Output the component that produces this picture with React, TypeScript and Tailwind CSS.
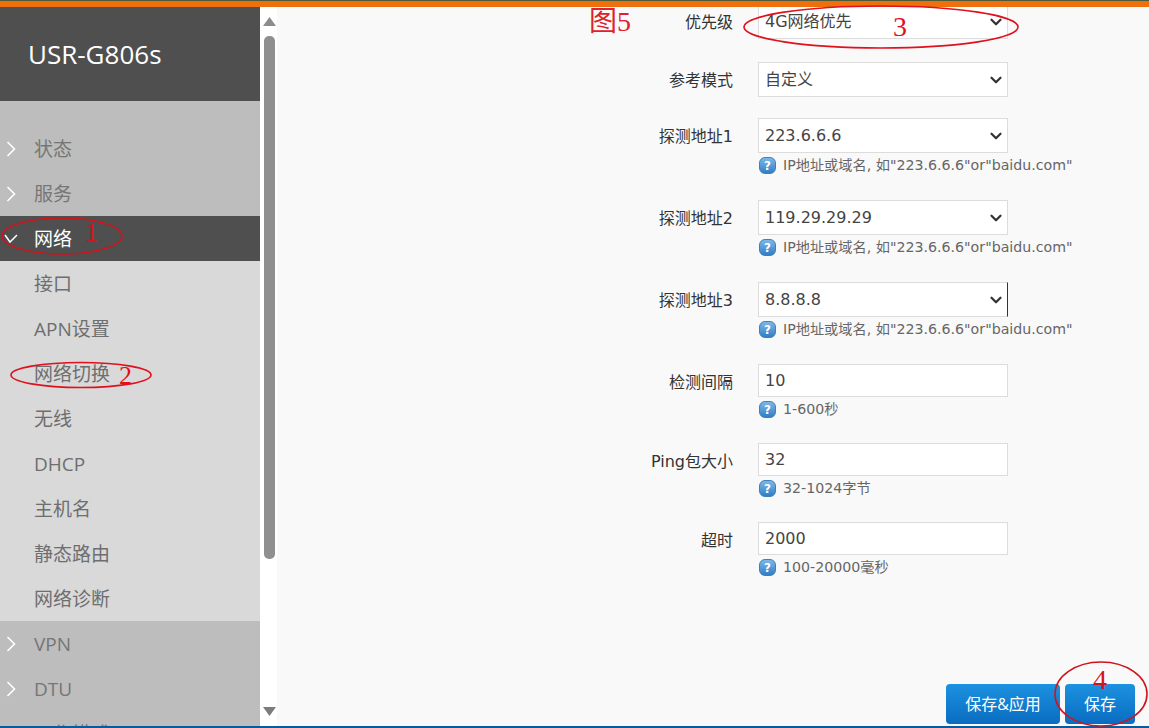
import { ChevronDown } from "lucide-react";

const sideFont = "font-['Open_Sans','Noto_Sans_CJK_SC',sans-serif]";
const formFont = "font-['DejaVu_Sans','Noto_Sans_CJK_SC',sans-serif]";
const markFont = "font-['Liberation_Serif','Noto_Sans_CJK_SC',serif]";

function Chevron({ open }: { open?: boolean }) {
  return open ? (
    <svg width="16" height="12" viewBox="0 0 16 12" fill="none" className="absolute left-[3px] top-[17px]">
      <polyline points="2,2 7,9 14,2" stroke="#ffffff" strokeWidth="1.5" />
    </svg>
  ) : (
    <svg width="10" height="16" viewBox="0 0 10 16" fill="none" className="absolute left-[6px] top-[15px]">
      <polyline points="1.5,1 8.5,8 1.5,15" stroke="#ffffff" strokeWidth="1.6" />
    </svg>
  );
}

function TopItem({ label, active }: { label: string; active?: boolean }) {
  return (
    <div
      className={`relative flex h-[45px] shrink-0 items-center pl-[34px] pt-[2px] text-[19px] ${
        active ? "bg-[#4f4f4f] text-white" : "text-[#767676]"
      }`}
    >
      <Chevron open={active} />
      {label}
    </div>
  );
}

function SubItem({ label }: { label: string }) {
  return <div className="flex h-[45px] shrink-0 items-center pl-[34px] pt-[2px] text-[19px] text-[#6e6e6e]">{label}</div>;
}

function Hint({ text }: { text: string }) {
  return (
    <div className={`flex items-center gap-[7px] whitespace-nowrap text-[14.2px] leading-none text-[#666666] ${formFont}`}>
      <span className="flex h-[17px] w-[17px] shrink-0 items-center justify-center rounded-[6px] border border-[#3f7fb8] bg-gradient-to-b from-[#7db8e8] to-[#2f7fc6] text-[12px] font-bold leading-none text-white">
        ?
      </span>
      {text}
    </div>
  );
}

function Row({
  label,
  value,
  hint,
  select,
  cursor,
  className,
}: {
  label: string;
  value: string;
  hint?: string;
  select?: boolean;
  cursor?: boolean;
  className: string;
}) {
  return (
    <div className={`flex gap-[25px] ${className}`}>
      <div className="flex h-[35px] w-[456px] items-center justify-end pt-[2px] text-[16px] text-[#333333]">
        {label}
      </div>
      <div className="w-[250px]">
        <div
          className={`relative flex items-center border border-[#dcdcdc] bg-white pl-[6px] pt-[1px] text-[16px] text-[#444444] ${
            select ? "h-[35px]" : "h-[33px]"
          } ${cursor ? "border-r-[#333333]" : ""}`}
        >
          {value}
          {select && (
            <ChevronDown size={18} strokeWidth={3} className="absolute right-[2px] top-[8px] text-[#333333]" />
          )}
        </div>
        {hint && (
          <div className={`flex items-center pl-[1px] ${select ? "h-[25px]" : "h-[25px]"} ${select ? "-mb-[1px]" : ""}`}>
            <Hint text={hint} />
          </div>
        )}
      </div>
    </div>
  );
}

const ipHint = 'IP地址或域名, 如"223.6.6.6"or"baidu.com"';

export default function App() {
  return (
    <div className="relative flex h-[728px] w-[1149px] flex-col overflow-hidden bg-[#f9f9f9]">
      <div className="h-[7px] shrink-0 border-t border-[#4a5a3a] bg-[#ee6f0c]" />

      <div className="flex min-h-0 flex-1">
        <aside className={`flex w-[260px] shrink-0 flex-col overflow-hidden bg-[#bdbdbd] ${sideFont}`}>
          <div className="flex h-[94px] shrink-0 items-center bg-[#4f4f4f] pl-[28px] text-[26px] text-white">
            USR-G806s
          </div>
          <div className="h-[25px] shrink-0" />
          <TopItem label="状态" />
          <TopItem label="服务" />
          <TopItem label="网络" active />
          <div className="flex shrink-0 flex-col bg-[#d9d9d9]">
            {["接口", "APN设置", "网络切换", "无线", "DHCP", "主机名", "静态路由", "网络诊断"].map((s) => (
              <SubItem key={s} label={s} />
            ))}
          </div>
          <TopItem label="VPN" />
          <TopItem label="DTU" />
          <TopItem label="工作模式" />
        </aside>

        <div className="flex w-[17px] shrink-0 flex-col items-center bg-white pt-[10px]">
          <svg width="13" height="9" viewBox="0 0 13 9" className="ml-[1px] shrink-0">
            <polygon points="6.5,0 13,9 0,9" fill="#8c8c8c" />
          </svg>
          <div className="ml-[2px] mt-[10px] h-[523px] w-[11px] shrink-0 rounded-[5px] bg-[#8f8f8f]" />
          <svg width="13" height="9" viewBox="0 0 13 9" className="ml-[1px] mt-[148px] shrink-0">
            <polygon points="0,0 13,0 6.5,9" fill="#7c7c7c" />
          </svg>
        </div>

        <main className={`flex min-w-0 flex-1 flex-col overflow-hidden ${formFont}`}>
          <div className="-mt-[3px] flex flex-col">
            <Row label="优先级" value="4G网络优先" select className="mb-[23px]" />
            <Row label="参考模式" value="自定义" select className="mb-[21px]" />
            <Row label="探测地址1" value="223.6.6.6" hint={ipHint} select className="mb-[23px]" />
            <Row label="探测地址2" value="119.29.29.29" hint={ipHint} select className="mb-[23px]" />
            <Row label="探测地址3" value="8.8.8.8" hint={ipHint} select cursor className="mb-[23px]" />
            <Row label="检测间隔" value="10" hint="1-600秒" className="mb-[21px]" />
            <Row label="Ping包大小" value="32" hint="32-1024字节" className="mb-[21px]" />
            <Row label="超时" value="2000" hint="100-20000毫秒" className="mb-0" />
          </div>
          <div className={`mt-auto flex justify-end gap-[5px] pb-[2px] pr-[14px] ${sideFont}`}>
            <button className="h-[40px] w-[114px] rounded-[4px] bg-gradient-to-b from-[#1c92e0] to-[#0a6cc0] text-[16px] text-white">
              保存&amp;应用
            </button>
            <button className="h-[40px] w-[70px] rounded-[4px] bg-gradient-to-b from-[#1c92e0] to-[#0a6cc0] text-[16px] text-white">
              保存
            </button>
          </div>
        </main>
      </div>

      <div className="h-[2px] shrink-0 bg-[#0b5a9e]" />

      {/* hand-drawn red annotations lying over the page */}
      <svg width="1149" height="728" viewBox="0 0 1149 728" fill="none" className="pointer-events-none absolute left-0 top-0">
        <ellipse cx="62" cy="236" rx="60" ry="18" stroke="#d0141c" strokeWidth="1.6" />
        <ellipse cx="81" cy="375" rx="70" ry="12.5" stroke="#e0101c" strokeWidth="1.6" />
        <ellipse cx="881" cy="27" rx="137" ry="21" stroke="#e0101c" strokeWidth="1.6" />
        <ellipse cx="1101" cy="694" rx="46" ry="32" stroke="#d0141c" strokeWidth="1.6" />
      </svg>
      <span className={`absolute left-[85px] top-[217px] text-[26px] leading-[32px] text-[#d0141c] ${markFont}`}>1</span>
      <span className={`absolute left-[119px] top-[360px] text-[26px] leading-[32px] text-[#e0101c] ${markFont}`}>2</span>
      <span className={`absolute left-[893px] top-[11px] text-[28px] leading-[32px] text-[#e0101c] ${markFont}`}>3</span>
      <span className={`absolute left-[1093px] top-[664px] text-[28px] leading-[32px] text-[#d0141c] ${markFont}`}>4</span>
      <span className={`absolute left-[589px] top-[5px] text-[28px] leading-[34px] text-[#e0202c] ${markFont}`}>图5</span>
    </div>
  );
}
